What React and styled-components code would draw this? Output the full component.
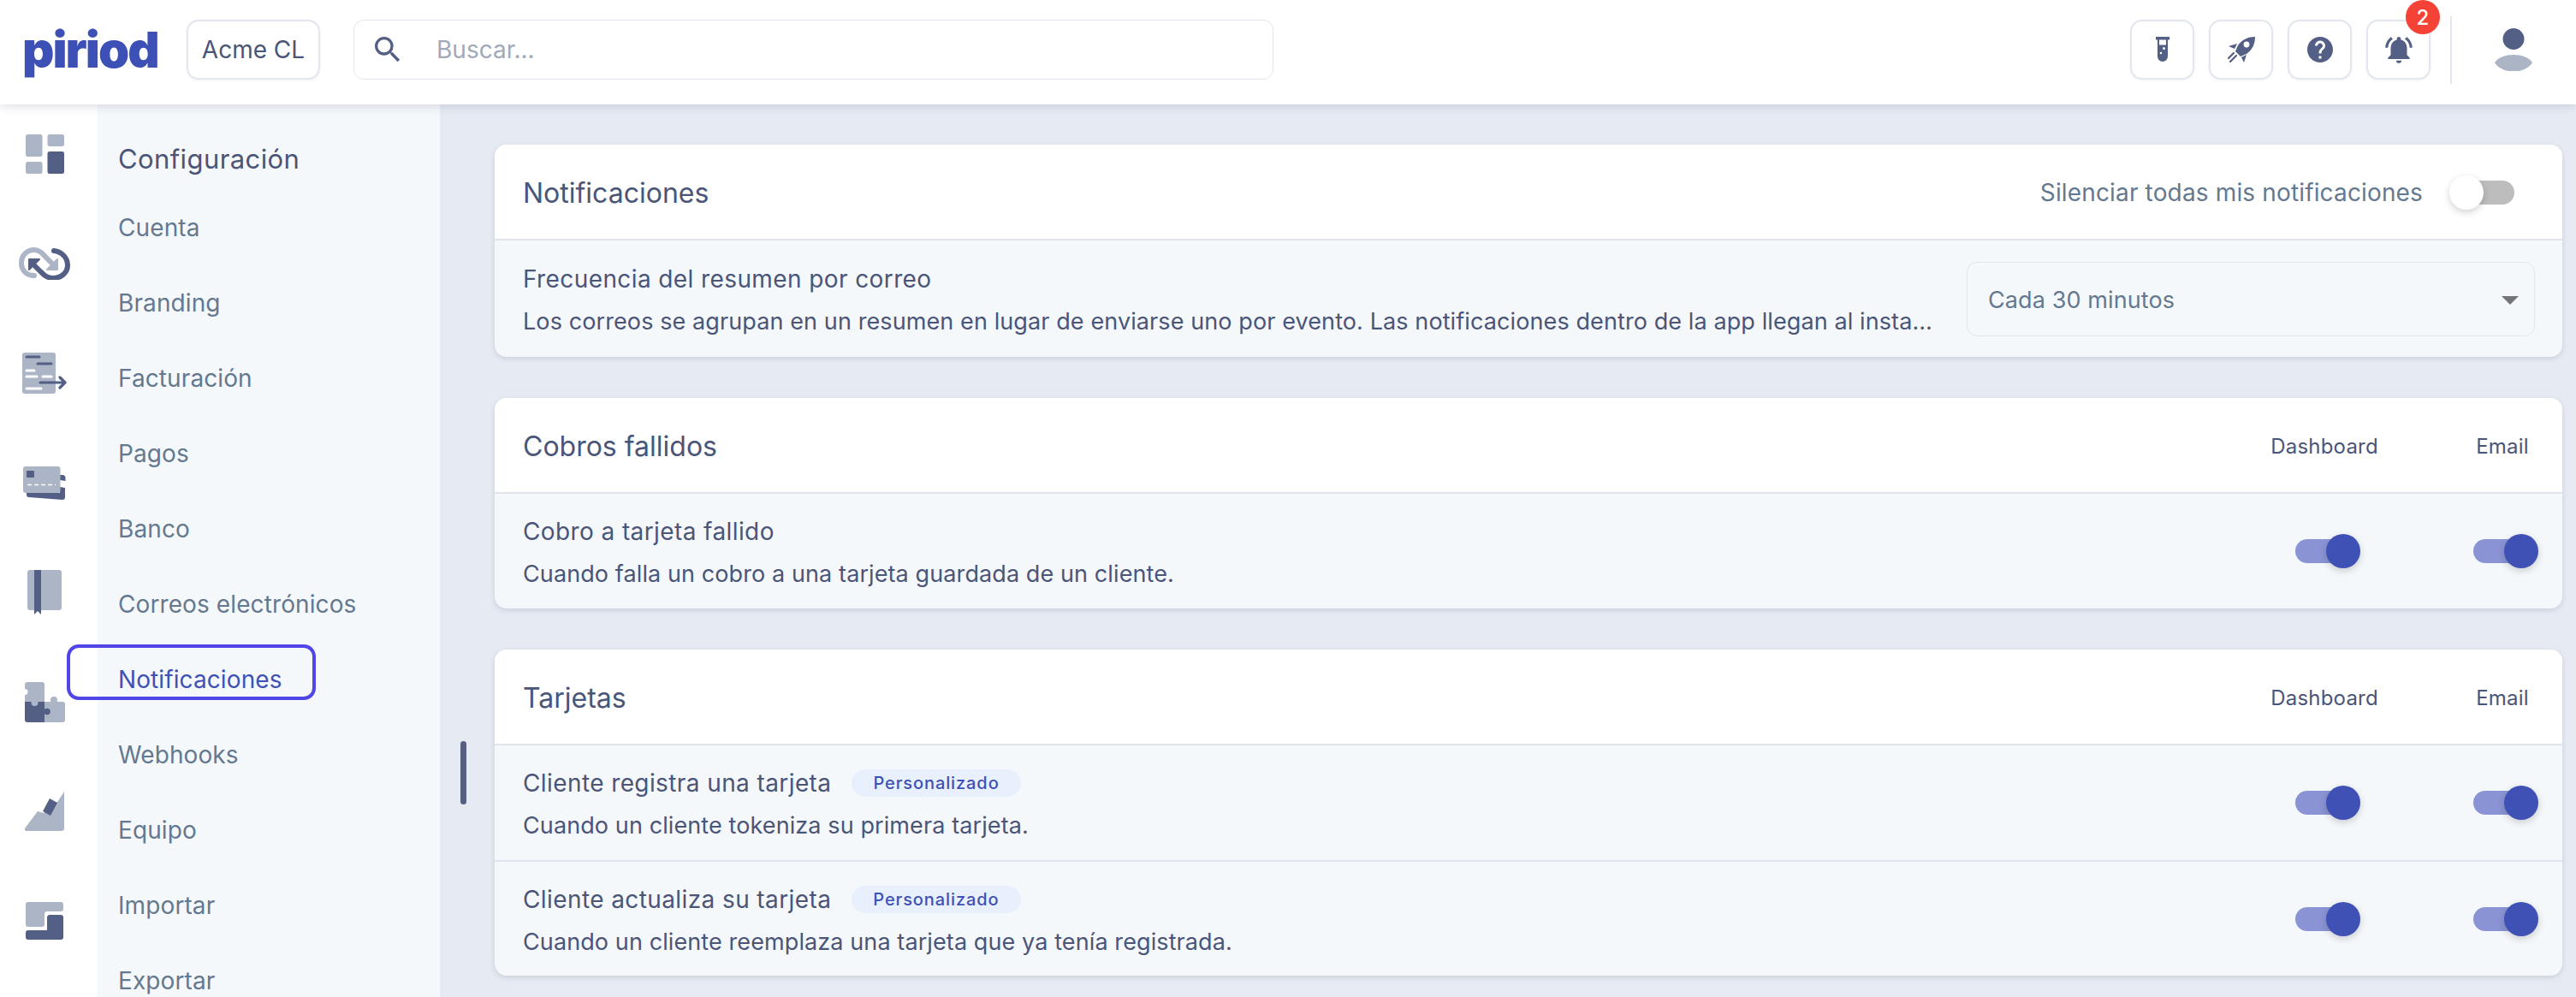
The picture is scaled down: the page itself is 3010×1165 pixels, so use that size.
import React from "react";
import styled, { createGlobalStyle } from "styled-components";
import { MdSearch, MdHelp, MdNotificationsActive } from "react-icons/md";

const GlobalStyle = createGlobalStyle`
  html, body { margin: 0; padding: 0; height: 100%; overflow: hidden; }
  body { font-family: Inter, "Liberation Sans", sans-serif; background: #e6ebf3; }
  *, *::after { box-sizing: border-box; }
`;

const DARK = "#535f85";
const LIGHT = "#abb5c5";

const Page = styled.div`
  width: 3010px;
  height: 1165px;
  display: flex;
  flex-direction: column;
  overflow: hidden;
`;

const Header = styled.header`
  position: relative;
  z-index: 2;
  flex: none;
  height: 122px;
  display: flex;
  align-items: center;
  padding: 0 50px 6px 26px;
  background: #fff;
  box-shadow: 0 3px 10px rgba(60, 70, 100, 0.16);
`;

const Logo = styled.div`
  width: 159px;
  font-size: 58px;
  font-weight: 900;
  line-height: 58px;
  letter-spacing: -2px;
  color: #3d50b5;
  white-space: nowrap;
`;

const OrgButton = styled.div`
  margin-left: 33px;
  width: 156px;
  height: 70px;
  display: flex;
  align-items: center;
  justify-content: center;
  border: 2px solid #e2e6ee;
  border-radius: 14px;
  box-shadow: 0 1px 3px rgba(60, 70, 100, 0.08);
  font-size: 28px;
  color: #4a5578;
`;

const Search = styled.div`
  margin-left: 39px;
  width: 1075px;
  height: 70px;
  display: flex;
  align-items: center;
  gap: 37px;
  padding-left: 19px;
  border: 1px solid #e2e6ee;
  border-radius: 12px;
  font-size: 28px;
  color: #a0aab8;
  svg { color: ${DARK}; }
`;

const Tools = styled.div`
  margin-left: auto;
  display: flex;
  align-items: center;
  gap: 17px;
`;

const ToolButton = styled.div`
  position: relative;
  width: 75px;
  height: 70px;
  display: flex;
  align-items: center;
  justify-content: center;
  border: 2px solid #e2e6ee;
  border-radius: 14px;
  box-shadow: 0 1px 3px rgba(60, 70, 100, 0.08);
  color: ${DARK};
`;

const Badge = styled.span`
  position: absolute;
  top: -25px;
  right: -13px;
  width: 40px;
  height: 40px;
  display: flex;
  align-items: center;
  justify-content: center;
  border-radius: 50%;
  background: #f44336;
  color: #fff;
  font-size: 24px;
  font-weight: 500;
`;

const Divider = styled.div`
  width: 2px;
  height: 79px;
  margin: 0 32px 0 6px;
  background: #e2e6ee;
`;

const Content = styled.div`
  flex: 1;
  min-height: 0;
  display: flex;
`;

const Rail = styled.nav`
  flex: none;
  width: 114px;
  display: flex;
  flex-direction: column;
  align-items: center;
  gap: 82px;
  padding: 35px 10px 0 0;
  background: #fff;
`;

const RailItem = styled.div`
  height: 46px;
  display: flex;
  align-items: center;
  justify-content: center;
`;

const Sidebar = styled.aside`
  flex: none;
  width: 400px;
  padding: 42px 24px 0;
  background: #f5f8fb;
`;

const SidebarTitle = styled.h2`
  margin: 0 0 14px;
  height: 44px;
  font-size: 31px;
  font-weight: 400;
  line-height: 44px;
  letter-spacing: 0.4px;
  color: #4a5578;
`;

const NavItem = styled.div`
  position: relative;
  height: 88px;
  font-size: 28px;
  line-height: 88px;
  letter-spacing: 0.1px;
  color: ${(p) => (p.$active ? "#3f51b5" : "#64798f")};
  ${(p) =>
    p.$active &&
    `&::after {
      content: "";
      position: absolute;
      top: 3px;
      left: -60px;
      width: 291px;
      height: 65px;
      border: 4px solid #4f46e5;
      border-radius: 14px;
    }`}
`;

const Main = styled.main`
  position: relative;
  flex: 1;
  min-width: 0;
  display: flex;
  flex-direction: column;
  gap: 48px;
  padding: 47px 16px 0 64px;
`;

const ScrollThumb = styled.div`
  position: absolute;
  top: 744px;
  left: 24px;
  width: 7px;
  height: 74px;
  border-radius: 4px;
  background: #565f80;
`;

const Card = styled.section`
  flex: none;
  border-radius: 14px;
  background: #f5f8fb;
  box-shadow: 0 2px 6px rgba(60, 70, 100, 0.18);
  overflow: hidden;
`;

const CardHeader = styled.div`
  height: 112px;
  display: flex;
  align-items: center;
  justify-content: space-between;
  padding: 2px 0 0 33px;
  background: #fff;
  border-bottom: 2px solid #e0e4ec;
`;

const CardTitle = styled.h3`
  margin: 0;
  font-size: 32px;
  font-weight: 400;
  color: #4a5578;
`;

const MuteGroup = styled.div`
  display: flex;
  align-items: center;
  gap: 39px;
  padding-right: 56px;
  font-size: 28px;
  letter-spacing: 0.15px;
  color: #64798f;
`;

const Columns = styled.div`
  flex: none;
  display: flex;
  align-items: center;
  gap: 68px;
`;

const Column = styled.div`
  width: 140px;
  display: flex;
  justify-content: center;
  font-size: 24px;
  letter-spacing: 0.2px;
  color: #4a5578;
`;

const Row = styled.div`
  height: 134px;
  display: flex;
  align-items: center;
  padding-left: 33px;
  & + & {
    height: 135px;
    border-top: 2px solid #e0e4ec;
  }
`;

const SettingsRow = styled(Row)`
  height: 136px;
  gap: 38px;
  padding-right: 32px;
`;

const RowText = styled.div`
  flex: 1;
  min-width: 0;
  padding-top: 4px;
`;

const RowTitle = styled.div`
  display: flex;
  align-items: center;
  gap: 24px;
  height: 34px;
  font-size: 28px;
  letter-spacing: 0.4px;
  color: #4a5578;
`;

const RowDescription = styled.div`
  margin-top: 16px;
  height: 34px;
  font-size: 27px;
  line-height: 34px;
  letter-spacing: 0.1px;
  color: #4a5578;
  white-space: nowrap;
  overflow: hidden;
  text-overflow: ellipsis;
`;

const Tag = styled.span`
  height: 32px;
  padding: 0 25px;
  display: inline-flex;
  align-items: center;
  border-radius: 16px;
  background: #e8f0fd;
  color: #3f51b5;
  font-size: 20px;
  font-weight: 500;
  letter-spacing: 0.9px;
`;

const Select = styled.div`
  position: relative;
  flex: none;
  width: 664px;
  height: 87px;
  display: flex;
  align-items: center;
  padding: 2px 0 0 24px;
  border: 1px solid #e0e4ec;
  border-radius: 12px;
  font-size: 27px;
  letter-spacing: 0.1px;
  color: #64798f;
  &::after {
    content: "";
    position: absolute;
    right: 18px;
    top: 39px;
    width: 20px;
    height: 10px;
    border-left: 10px solid transparent;
    border-right: 10px solid transparent;
    border-top: 10px solid #757575;
  }
`;

const SwitchTrack = styled.span`
  position: relative;
  display: block;
  width: 68px;
  height: 28px;
  border-radius: 14px;
  background: ${(p) => (p.$on ? "#8a94d4" : "#bdbdbd")};
`;

const SwitchThumb = styled.span`
  position: absolute;
  top: -6px;
  left: ${(p) => (p.$on ? "36px" : "-8px")};
  width: 40px;
  height: 40px;
  border-radius: 50%;
  background: ${(p) => (p.$on ? "#3f51b5" : "#fff")};
  box-shadow: 0 3px 8px rgba(0, 0, 0, 0.18);
`;

const Switch = ({ on }) => (
  <SwitchTrack $on={on}>
    <SwitchThumb $on={on} />
  </SwitchTrack>
);

const DashboardIcon = () => (
  <svg width="45" height="46" viewBox="0 0 45 46">
    <rect width="19.5" height="26" rx="2.5" fill={LIGHT} />
    <rect x="25.5" width="19.5" height="14" rx="2.5" fill={LIGHT} />
    <rect y="32" width="19.5" height="14" rx="2.5" fill={LIGHT} />
    <rect x="25.5" y="20" width="19.5" height="26" rx="2.5" fill={DARK} />
  </svg>
);

const RecurringIcon = () => (
  <svg width="60" height="38" viewBox="0 0 60 38" fill="none" strokeWidth="6" strokeLinecap="round">
    <path d="M18 33 C8 33 3 26 3 18 C3 9 10 3 18 3 C25 3 28 8 33 13 L40 20" stroke={LIGHT} />
    <path d="M45 14 V26 H33 Z" fill={LIGHT} stroke={LIGHT} strokeWidth="2" strokeLinejoin="round" />
    <path d="M41 4 C50 5 57 12 57 21 C57 30 49 36 40 36 C32 36 28 31 24 27 L18 21" stroke={DARK} />
    <path d="M12 14 H24 L12 26 Z" fill={DARK} stroke={DARK} strokeWidth="2" strokeLinejoin="round" />
  </svg>
);

const InvoiceIcon = () => (
  <svg width="52" height="48" viewBox="0 0 52 48" fill="none">
    <rect width="39" height="48" rx="3" fill={LIGHT} />
    <path d="M5 5 H20 M18 13 H34" stroke={DARK} strokeWidth="3" strokeLinecap="round" />
    <path d="M5 21 H14 M5 28 H17 M24 28 H34 M5 42 H22" stroke="#fff" strokeWidth="3" strokeLinecap="round" />
    <path d="M21 35 H49 M44 29 L50 35 L44 41" stroke={DARK} strokeWidth="3.2" strokeLinecap="round" strokeLinejoin="round" />
  </svg>
);

const CardsIcon = () => (
  <svg width="50" height="39" viewBox="0 0 50 39">
    <path d="M43 10 h3 a3.5 3.5 0 0 1 3.5 3.5 v3.5 l-6.5 -1 z" fill={DARK} />
    <path d="M4 31 H43 V24 L49 25 V36 a3 3 0 0 1 -3 3 L7 36 a3 3 0 0 1 -3 -3 z" fill={DARK} />
    <rect width="43.5" height="31" rx="3" fill={LIGHT} />
    <rect x="4" y="5" width="9" height="8" rx="1" fill={DARK} />
    <path d="M5 21.5 H38" stroke="#fff" strokeWidth="1.6" strokeDasharray="5 3" />
  </svg>
);

const BookIcon = () => (
  <svg width="40" height="52" viewBox="0 0 40 52">
    <rect width="40" height="47" rx="3" fill={LIGHT} />
    <path d="M8 0 H16 V52 L12 48 L8 52 Z" fill={DARK} />
  </svg>
);

const PuzzleIcon = () => (
  <svg width="47" height="47" viewBox="0 0 47 47">
    <path d="M3 0 H20 a3 3 0 0 1 3 3 V24 H0 V15 a3.5 3.5 0 0 0 0 -7 V3 a3 3 0 0 1 3 -3 z" fill={LIGHT} />
    <path d="M23 23 H44 a3 3 0 0 1 3 3 V44 a3 3 0 0 1 -3 3 H23 Z" fill={LIGHT} />
    <rect x="30" y="17" width="8" height="8" rx="4" fill={LIGHT} />
    <path d="M0 23 H23 V47 H3 a3 3 0 0 1 -3 -3 Z" fill={DARK} />
    <circle cx="11.5" cy="24" r="4" fill={LIGHT} />
    <circle cx="26" cy="34.5" r="3.8" fill={DARK} />
  </svg>
);

const ChartIcon = () => (
  <svg width="46" height="46" viewBox="0 0 46 46">
    <path d="M0 43 L15 23 L22 25 L38 12 L46 0 V43 a3 3 0 0 1 -3 3 H2 a2 2 0 0 1 -2 -3 z" fill={LIGHT} />
    <path d="M29 8 L38 13 L30 28 L21 23 Z" fill={DARK} />
  </svg>
);

const ImportIcon = () => (
  <svg width="44" height="44" viewBox="0 0 44 44">
    <path d="M3 0 H41 a3 3 0 0 1 3 3 V8 a3 3 0 0 1 -3 3 H25 a3 3 0 0 0 -3 3 V26 a3 3 0 0 1 -3 3 H3 a3 3 0 0 1 -3 -3 V3 a3 3 0 0 1 3 -3 z" fill={LIGHT} />
    <path d="M27 15 H41 a3 3 0 0 1 3 3 V41 a3 3 0 0 1 -3 3 H3 a3 3 0 0 1 -3 -3 V36 a3 3 0 0 1 3 -3 H25 V17 z" fill={DARK} />
  </svg>
);

const TubeIcon = () => (
  <svg width="16" height="30" viewBox="0 0 16 30">
    <path d="M0 0 H16 V3.5 H14 V23 a6 6 0 0 1 -12 0 V3.5 H0 Z" fill={DARK} />
    <rect x="4" y="3.5" width="8" height="6" fill="#fff" />
    <circle cx="9.5" cy="13.5" r="1.5" fill="#fff" />
    <circle cx="6" cy="19" r="1.3" fill="#fff" />
  </svg>
);

const RocketIcon = () => (
  <svg width="32" height="30" viewBox="0 0 32 30">
    <path d="M32 0 C24 0 17 3 12 10 L9 17 L15 23 L22 20 C29 15 32 8 32 0 Z" fill={DARK} />
    <circle cx="22" cy="9" r="3.4" fill="#fff" />
    <path d="M11 8 L1 11 L8 14 Z M22 21 L19 30 L16 24 Z" fill={DARK} />
    <path d="M7 19 L1 25 M10 22 L3 29" stroke={DARK} strokeWidth="2.2" strokeLinecap="round" />
  </svg>
);

const AvatarIcon = () => (
  <svg width="46" height="50" viewBox="0 0 46 50">
    <circle cx="23" cy="12.5" r="12.5" fill={DARK} />
    <path d="M1 40 C9 28 37 28 45 40 C37 54 9 54 1 40 Z" fill={LIGHT} />
  </svg>
);

const navItems = ["Cuenta", "Branding", "Facturación", "Pagos", "Banco", "Correos electrónicos", "Notificaciones", "Webhooks", "Equipo", "Importar", "Exportar"];

const railIcons = [DashboardIcon, RecurringIcon, InvoiceIcon, CardsIcon, BookIcon, PuzzleIcon, ChartIcon, ImportIcon];

const ChannelHeader = () => (
  <Columns>
    <Column>Dashboard</Column>
    <Column>Email</Column>
  </Columns>
);

const ChannelSwitches = () => (
  <Columns>
    <Column><Switch on /></Column>
    <Column><Switch on /></Column>
  </Columns>
);

const NotificationRow = ({ title, description, custom }) => (
  <Row>
    <RowText>
      <RowTitle>
        {title}
        {custom && <Tag>Personalizado</Tag>}
      </RowTitle>
      <RowDescription>{description}</RowDescription>
    </RowText>
    <ChannelSwitches />
  </Row>
);

export default function App() {
  return (
    <Page>
      <GlobalStyle />
      <Header>
        <Logo>piriod</Logo>
        <OrgButton>Acme CL</OrgButton>
        <Search>
          <MdSearch size={40} />
          Buscar...
        </Search>
        <Tools>
          <ToolButton><TubeIcon /></ToolButton>
          <ToolButton><RocketIcon /></ToolButton>
          <ToolButton><MdHelp size={36} /></ToolButton>
          <ToolButton>
            <MdNotificationsActive size={38} />
            <Badge>2</Badge>
          </ToolButton>
          <Divider />
          <AvatarIcon />
        </Tools>
      </Header>
      <Content>
        <Rail>
          {railIcons.map((Icon, i) => (
            <RailItem key={i}><Icon /></RailItem>
          ))}
        </Rail>
        <Sidebar>
          <SidebarTitle>Configuración</SidebarTitle>
          {navItems.map((item) => (
            <NavItem key={item} $active={item === "Notificaciones"}>{item}</NavItem>
          ))}
        </Sidebar>
        <Main>
          <ScrollThumb />
          <Card>
            <CardHeader>
              <CardTitle>Notificaciones</CardTitle>
              <MuteGroup>
                Silenciar todas mis notificaciones
                <Switch />
              </MuteGroup>
            </CardHeader>
            <SettingsRow>
              <RowText>
                <RowTitle>Frecuencia del resumen por correo</RowTitle>
                <RowDescription>
                  Los correos se agrupan en un resumen en lugar de enviarse uno por evento. Las notificaciones dentro de la app llegan al instante.
                </RowDescription>
              </RowText>
              <Select>Cada 30 minutos</Select>
            </SettingsRow>
          </Card>
          <Card>
            <CardHeader>
              <CardTitle>Cobros fallidos</CardTitle>
              <ChannelHeader />
            </CardHeader>
            <NotificationRow title="Cobro a tarjeta fallido" description="Cuando falla un cobro a una tarjeta guardada de un cliente." />
          </Card>
          <Card>
            <CardHeader>
              <CardTitle>Tarjetas</CardTitle>
              <ChannelHeader />
            </CardHeader>
            <NotificationRow custom title="Cliente registra una tarjeta" description="Cuando un cliente tokeniza su primera tarjeta." />
            <NotificationRow custom title="Cliente actualiza su tarjeta" description="Cuando un cliente reemplaza una tarjeta que ya tenía registrada." />
          </Card>
        </Main>
      </Content>
    </Page>
  );
}
